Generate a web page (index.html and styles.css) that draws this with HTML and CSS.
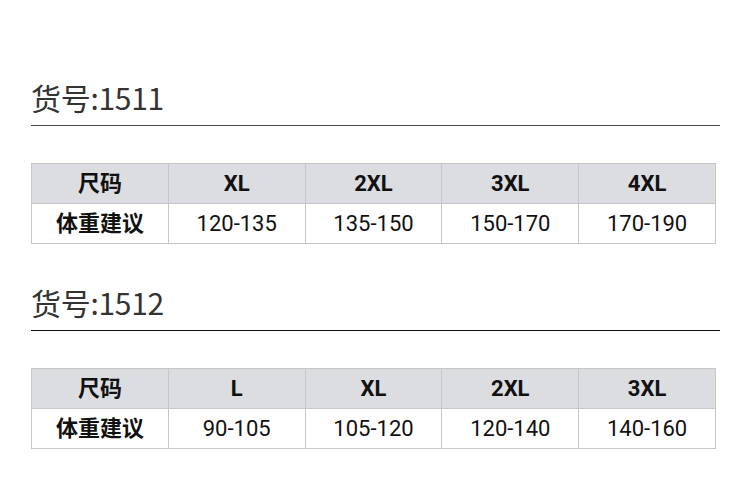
FILE: index.html
```html
<!DOCTYPE html>
<html>
<head>
<meta charset="utf-8">
<link rel="stylesheet" href="styles.css">
</head>
<body>
<div class="page">
  <section class="block">
    <h2 class="title">货号:1511</h2>
    <table class="size">
      <tr class="head"><th class="cjk">尺码</th><th>XL</th><th>2XL</th><th>3XL</th><th>4XL</th></tr>
      <tr><th class="cjk label">体重建议</th><td>120-135</td><td>135-150</td><td>150-170</td><td>170-190</td></tr>
    </table>
  </section>
  <section class="block">
    <h2 class="title dark">货号:1512</h2>
    <table class="size">
      <tr class="head"><th class="cjk">尺码</th><th>L</th><th>XL</th><th>2XL</th><th>3XL</th></tr>
      <tr><th class="cjk label">体重建议</th><td>90-105</td><td>105-120</td><td>120-140</td><td>140-160</td></tr>
    </table>
  </section>
</div>
</body>
</html>
```
FILE: styles.css
```css
html, body { margin: 0; padding: 0; background: #fff; }
.page { padding: 77px 0 0 31px; }
.block { margin: 0 0 38px 0; }
.title {
  margin: 0;
  width: 689px;
  height: 40px;
  line-height: 40px;
  padding-bottom: 8px;
  border-bottom: 1px solid #4a4a4a;
  font-family: "Noto Sans CJK SC", sans-serif;
  font-weight: 400;
  font-size: 30px;
  letter-spacing: -0.3px;
  color: #333;
}
.title.dark { border-bottom-color: #111; }
.size {
  margin-top: 37px;
  border-collapse: collapse;
  width: 685px;
  table-layout: fixed;
  font-family: Roboto, "Noto Sans CJK SC", sans-serif;
  font-size: 22px;
  color: #111;
}
.size th, .size td {
  border: 1px solid #c6c6c6;
  height: 39px;
  padding: 0;
  text-align: center;
  vertical-align: middle;
  line-height: 26px;
}
.size th { font-weight: 700; }
.size td { font-weight: 400; }
.size th.cjk {
  font-family: "Noto Sans CJK SC", sans-serif;
  height: 34px;
  padding-bottom: 5px;
}
.head th { background: #dcdde1; }
.size th.label { background: #fff; }
```
